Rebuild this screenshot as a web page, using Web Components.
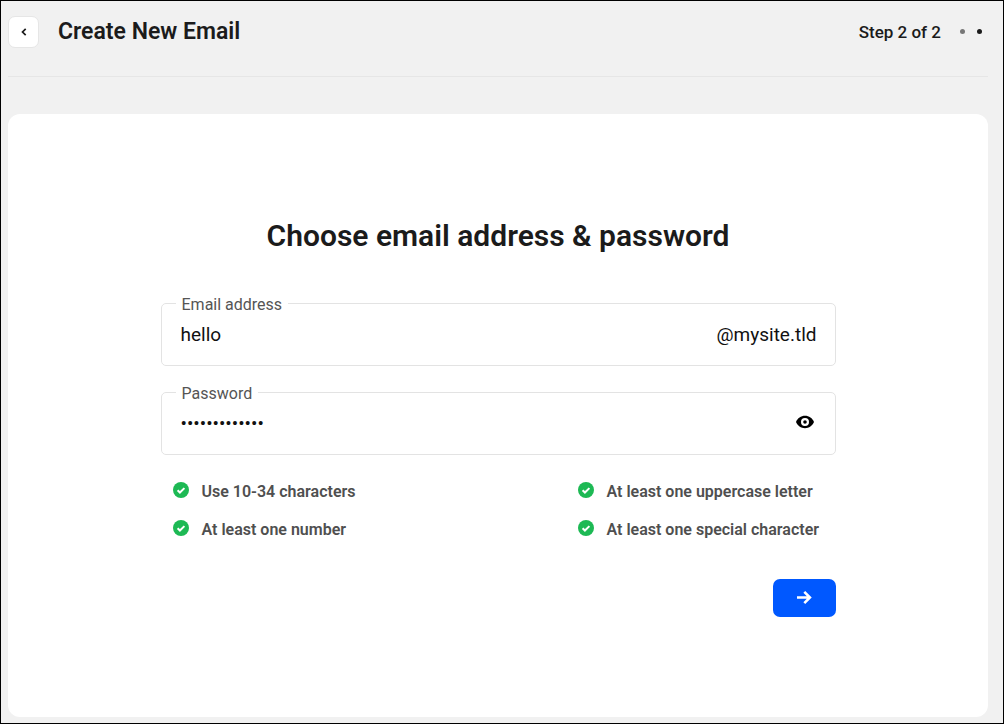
<!DOCTYPE html>
<html lang="en">
<head>
<meta charset="utf-8">
<meta name="viewport" content="width=device-width, initial-scale=1">
<title>Create New Email</title>
<style>
  html, body { margin: 0; }
  body { font-family: Roboto, "Liberation Sans", sans-serif; color: #1b1b1b; background: #f1f1f1; }
</style>
</head>
<body>
<wizard-page>
  <wizard-header slot="header" heading="Create New Email" step="2" total="2"></wizard-header>
  <content-card>
    <email-form heading="Choose email address &amp; password"></email-form>
  </content-card>
</wizard-page>

<script>
class BaseElement extends HTMLElement {
  connectedCallback() {
    if (this.shadowRoot) return;
    this.attachShadow({ mode: "open" }).innerHTML =
      "<style>*{box-sizing:border-box}:host{display:block;box-sizing:border-box}</style>" + this.render();
  }
}

customElements.define("wizard-page", class extends BaseElement {
  render() {
    return `
      <style>
        :host { display: flex; flex-direction: column; min-height: 100vh; border: 1px solid #000; padding: 0 15px 6px 7px; }
        main { flex: 1; display: flex; flex-direction: column; padding-top: 37px; }
        ::slotted(content-card) { flex: 1; }
      </style>
      <slot name="header"></slot>
      <main><slot></slot></main>`;
  }
});

customElements.define("wizard-header", class extends BaseElement {
  render() {
    const step = Number(this.getAttribute("step"));
    const total = Number(this.getAttribute("total"));
    return `
      <style>
        header { display: flex; align-items: center; height: 76px; padding-bottom: 14px; border-bottom: 1px solid #e6e6e6; }
        button { display: grid; place-items: center; width: 31px; height: 32px; padding: 0; border: 1px solid #e6e6e6; border-radius: 7px; background: #fff; color: #1b1b1b; cursor: pointer; }
        h1 { flex: 1; margin: 0 0 0 19px; font-size: 23px; line-height: 32px; font-weight: 600; }
      </style>
      <header>
        <button type="button" aria-label="Back">
          <svg width="6" height="8" viewBox="0 0 6 8" fill="none" stroke="currentColor" stroke-width="1.7"><path d="M4.7 .8 1.5 4l3.2 3.2"/></svg>
        </button>
        <h1>${this.getAttribute("heading")}</h1>
        <step-indicator step="${step}" total="${total}"></step-indicator>
      </header>`;
  }
});

customElements.define("step-indicator", class extends BaseElement {
  render() {
    const step = Number(this.getAttribute("step"));
    const total = Number(this.getAttribute("total"));
    let dots = "";
    for (let i = 1; i <= total; i++) dots += `<i class="${i === step ? "current" : ""}"></i>`;
    return `
      <style>
        :host { display: flex; align-items: center; gap: 19px; padding-right: 6px; font-size: 17px; line-height: 24px; font-weight: 500; }
        div { display: flex; gap: 12px; }
        i { width: 5px; height: 5px; border-radius: 50%; background: #777; }
        .current { background: #1b1b1b; }
      </style>
      <span>Step ${step} of ${total}</span>
      <div aria-hidden="true">${dots}</div>`;
  }
});

customElements.define("content-card", class extends BaseElement {
  render() {
    return `
      <style>
        :host { background: #fff; border-radius: 12px; padding: 101px 24px 80px; }
      </style>
      <slot></slot>`;
  }
});

customElements.define("email-form", class extends BaseElement {
  render() {
    return `
      <style>
        :host { max-width: 675px; margin: 0 auto; }
        h2 { margin: 0 0 35px; text-align: center; font-size: 30px; line-height: 42px; font-weight: 600; }
        form { display: grid; gap: 15px; }
        ul { display: grid; grid-template-columns: 3fr 2fr; row-gap: 14px; margin: 10px 0 22px; padding: 0; list-style: none; }
        footer { display: flex; justify-content: flex-end; }
        button { display: grid; place-items: center; width: 63px; height: 38px; padding: 0; border: 0; border-radius: 7px; background: #0058ff; color: #fff; cursor: pointer; }
      </style>
      <h2>${this.getAttribute("heading").replace("&", "&amp;")}</h2>
      <form>
        <outlined-field label="Email address" type="text" value="hello">@mysite.tld</outlined-field>
        <outlined-field label="Password" type="password" value="Secret-Pass12"><reveal-button></reveal-button></outlined-field>
        <ul>
          <li><check-item>Use 10-34 characters</check-item></li>
          <li><check-item>At least one uppercase letter</check-item></li>
          <li><check-item>At least one number</check-item></li>
          <li><check-item>At least one special character</check-item></li>
        </ul>
        <footer>
          <button type="button" aria-label="Next">
            <svg width="16" height="14" viewBox="0 0 16 14" fill="none" stroke="currentColor" stroke-width="2.6"><path d="M1 6.500h13M8.300 .9 13.900 6.500l-5.600 5.600"/></svg>
          </button>
        </footer>
      </form>`;
  }
});

customElements.define("outlined-field", class extends BaseElement {
  render() {
    return `
      <style>
        fieldset { min-width: 0; margin: 0; padding: 0 18px 9px 19px; border: 1px solid #e3e3e3; border-radius: 5px; }
        legend { margin-left: -5px; padding: 4px 6px 0; font-size: 16px; line-height: 18px; color: #555; }
        div { display: flex; align-items: center; height: 42px; font-size: 19px; line-height: 24px; color: #111; }
        input { flex: 1; min-width: 0; height: 24px; padding: 0; border: 0; outline: 0; background: none; font: inherit; color: inherit; }
      </style>
      <fieldset>
        <legend><label for="control">${this.getAttribute("label")}</label></legend>
        <div>
          <input id="control" type="${this.getAttribute("type")}" value="${this.getAttribute("value")}" autocomplete="off">
          <slot></slot>
        </div>
      </fieldset>`;
  }
});

customElements.define("reveal-button", class extends BaseElement {
  render() {
    return `
      <style>
        button { display: grid; justify-items: center; align-items: start; width: 24px; height: 18px; padding: 0; border: 0; background: none; color: #000; cursor: pointer; }
      </style>
      <button type="button" aria-label="Show password">
        <svg width="18" height="14" viewBox="0 0 18 14"><path fill="currentColor" fill-rule="evenodd" d="M9 .8C13 .8 16.5 3.3 18 7c-1.500 3.700-5 6.200-9 6.200S1.500 10.700 0 7C1.500 3.300 5 .8 9 .8ZM9 3a4 4 0 1 0 0 8 4 4 0 0 0 0-8Zm0 2.200a1.800 1.800 0 1 1 0 3.600 1.800 1.800 0 0 1 0-3.600Z"/></svg>
      </button>`;
  }
});

customElements.define("check-item", class extends BaseElement {
  render() {
    return `
      <style>
        :host { display: flex; align-items: flex-start; gap: 13px; padding-left: 12px; font-size: 16px; line-height: 24px; font-weight: 600; color: #4f4f4f; }
        svg { flex: none; margin-top: 2px; }
      </style>
      <svg width="16" height="16" viewBox="0 0 16 16" aria-hidden="true"><circle cx="8" cy="8" r="8" fill="#1db954"/><path d="m4.600 8.300 2.300 2.200 4.500-4.400" fill="none" stroke="#fff" stroke-width="2"/></svg>
      <span><slot></slot></span>`;
  }
});
</script>
</body>
</html>
